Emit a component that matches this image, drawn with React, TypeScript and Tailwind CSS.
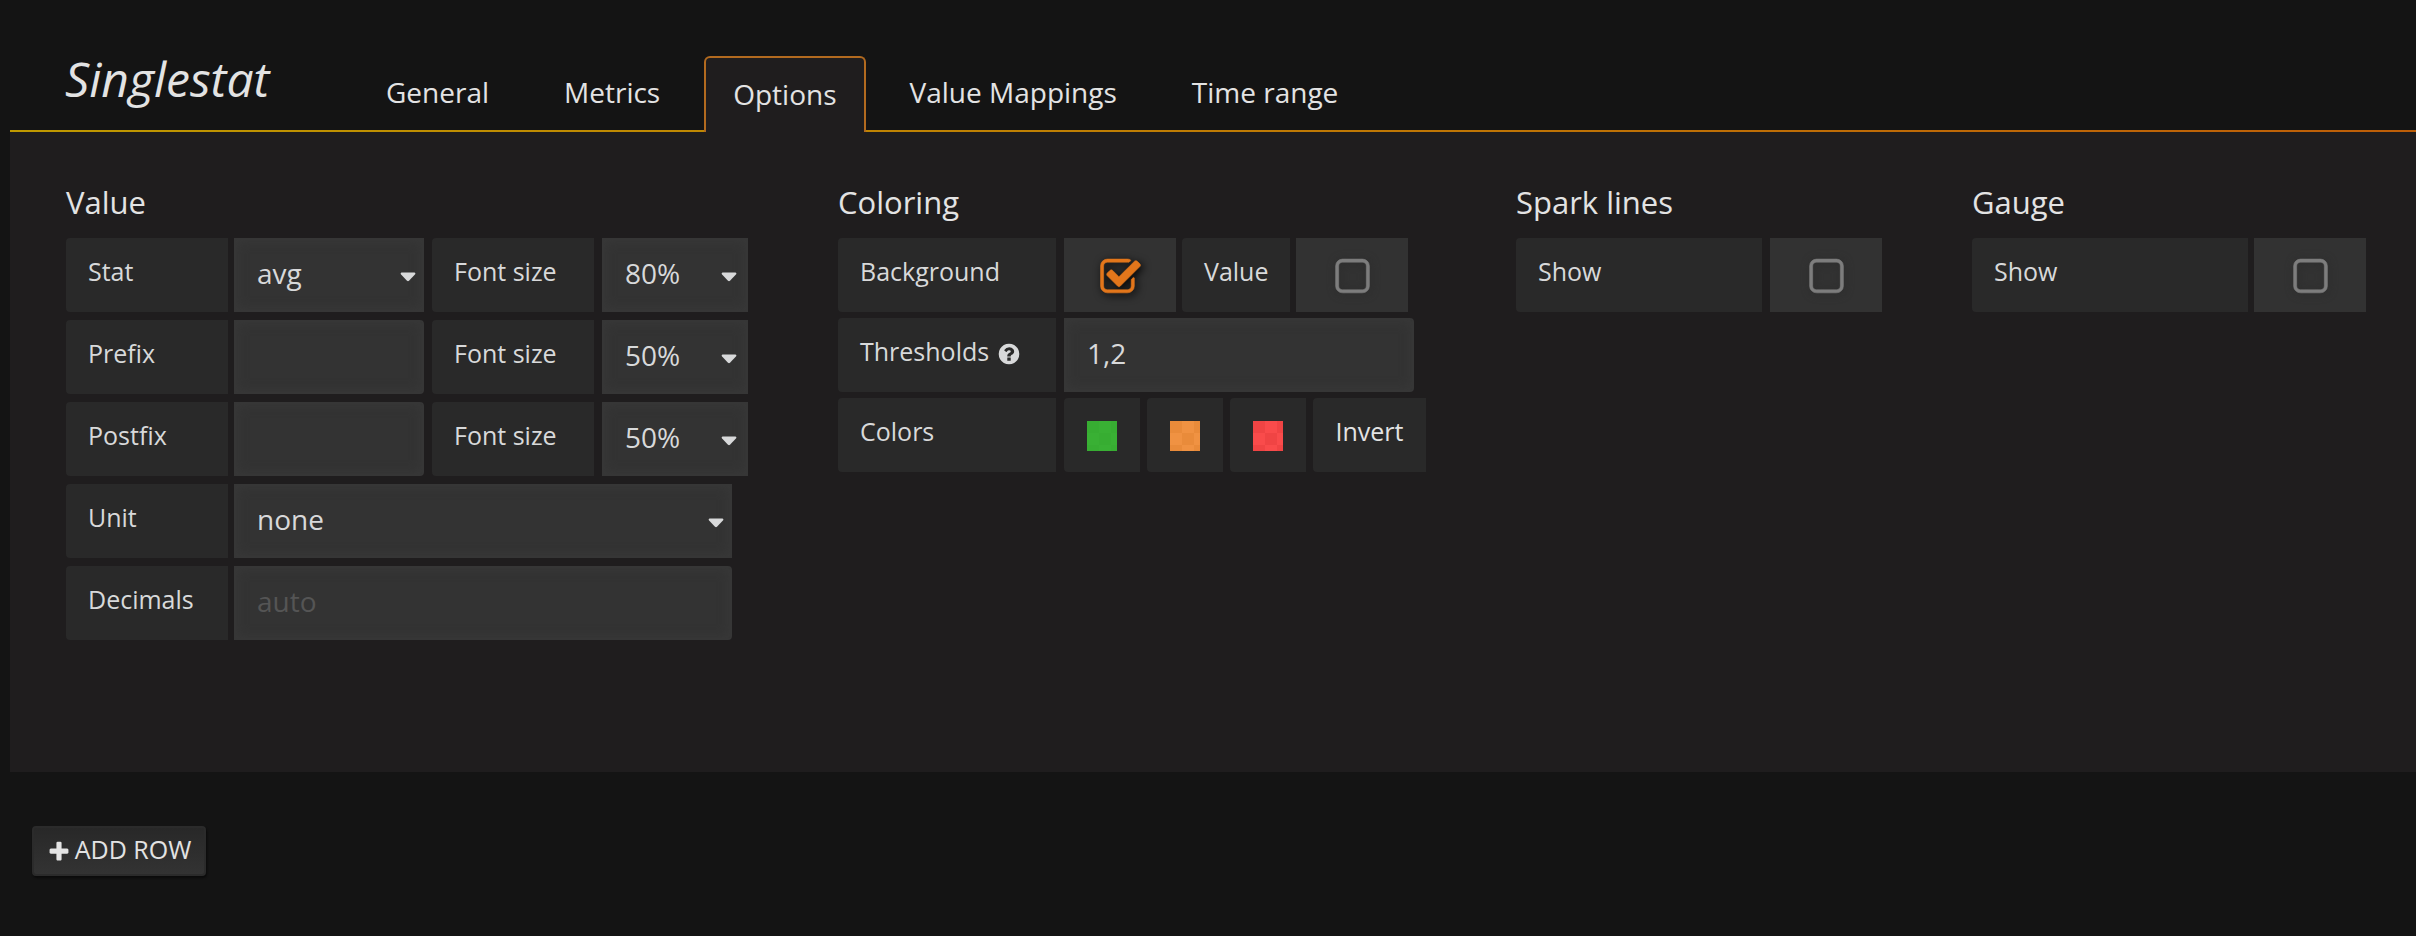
import { useState } from "react";
import type { ReactNode } from "react";

const LABEL = "flex h-[74px] shrink-0 items-center rounded-l bg-[#292929] pb-1.5 pl-[22px] text-[25px] text-[#d8d9da]";
const FIELD =
  "block h-[74px] w-full appearance-none border-2 border-[#363636] bg-[#333333] pb-1 pl-[21px] text-[28px] text-[#d8d9da] shadow-[inset_0_0_12px_#393939] outline-none placeholder:text-[#555555]";

function Select({
  id,
  value,
  options,
  width,
  caret = "right-2",
}: {
  id: string;
  value: string;
  options: string[];
  width: string;
  caret?: string;
}) {
  const [current, setCurrent] = useState(value);
  return (
    <div className={`relative ${width}`}>
      <select id={id} value={current} onChange={(e) => setCurrent(e.target.value)} className={FIELD}>
        {options.map((o) => (
          <option key={o}>{o}</option>
        ))}
      </select>
      <svg
        viewBox="0 0 16 10"
        className={`pointer-events-none absolute top-[34px] h-2.5 w-4 fill-[#d8d9da] ${caret}`}
      >
        <path d="M1.5 .5h13q1.6.6.4 2L9 8.8q-1 .9-2 0L1.1 2.5Q0 1.1 1.5.5z" />
      </svg>
    </div>
  );
}

function Check({ id, label, defaultChecked = false }: { id: string; label: string; defaultChecked?: boolean }) {
  const [on, setOn] = useState(defaultChecked);
  return (
    <label className="relative flex h-[74px] w-28 shrink-0 cursor-pointer items-center justify-center bg-[#323232] pt-1">
      <input
        id={id}
        type="checkbox"
        aria-label={label}
        checked={on}
        onChange={() => setOn(!on)}
        className="absolute inset-0 cursor-pointer appearance-none"
      />
      {on ? (
        <svg
          viewBox="0 0 1792 1792"
          className="pointer-events-none h-[43px] w-[43px] fill-[#e3761b] stroke-[#e3761b] stroke-[24] drop-shadow-[2px_2px_4px_#000000]"
        >
          <path d="M1472 930v318q0 119-84.5 203.5t-203.5 84.5h-832q-119 0-203.5-84.5t-84.5-203.5v-832q0-119 84.5-203.5t203.5-84.5h832q63 0 117 25 15 7 18 23 3 17-9 29l-49 49q-10 10-23 10-3 0-9-2-23-6-45-6h-832q-66 0-113 47t-47 113v832q0 66 47 113t113 47h832q66 0 113-47t47-113v-254q0-13 9-22l64-64q10-10 23-10 6 0 12 3 20 8 20 29zm231-489l-814 814q-24 24-57 24t-57-24l-430-430q-24-24-24-57t24-57l110-110q24-24 57-24t57 24l263 263 647-647q24-24 57-24t57 24l110 110q24 24 24 57t-24 57z" />
        </svg>
      ) : (
        <svg
          viewBox="0 0 1792 1792"
          className="pointer-events-none h-[43px] w-[43px] fill-[#7d7d7d] stroke-[#7d7d7d] stroke-[24] drop-shadow-[1px_1px_4px_#2a2a2a]"
        >
          <path d="M1312 256h-832q-66 0-113 47t-47 113v832q0 66 47 113t113 47h832q66 0 113-47t47-113v-832q0-66-47-113t-113-47zm288 160v832q0 119-84.5 203.5t-203.5 84.5h-832q-119 0-203.5-84.5t-84.5-203.5v-832q0-119 84.5-203.5t203.5-84.5h832q119 0 203.5 84.5t84.5 203.5z" />
        </svg>
      )}
    </label>
  );
}

function Section({ title, children }: { title: string; children: ReactNode }) {
  return (
    <section className="shrink-0">
      <h2 className="mb-4 text-[31px] leading-[40px] text-[#e3e3e3]">{title}</h2>
      {children}
    </section>
  );
}

const TABS = ["General", "Metrics", "Options", "Value Mappings", "Time range"];
const STATS = ["avg", "min", "max", "current", "total"];
const UNITS = ["none", "short", "percent", "bytes"];
const SIZES = ["20%", "30%", "50%", "70%", "80%", "100%"];
const SWATCHES = [
  { name: "Green", a: "bg-[#37ad32]", b: "fill-[#39b034]" },
  { name: "Orange", a: "bg-[#e98b3a]", b: "fill-[#f09242]" },
  { name: "Red", a: "bg-[#f04444]", b: "fill-[#f94b4b]" },
];

export default function App() {
  const [tab, setTab] = useState("Options");
  return (
    <div className="min-h-screen bg-[#141414] pl-[10px] font-['Open_Sans','Noto_Sans',sans-serif] text-[#e3e3e3]">
      <header className="flex h-[132px] items-end bg-[linear-gradient(to_right,#bf9900,#be5e08)] bg-[length:100%_2px] bg-bottom bg-no-repeat pl-[55px]">
        <h1 className="mb-[18px] w-[290px] text-[48px] italic leading-[70px]">Singlestat</h1>
        <nav role="tablist" className="flex items-end gap-[13px]">
          {TABS.map((t) => (
            <button
              key={t}
              type="button"
              role="tab"
              aria-selected={t === tab}
              onClick={() => setTab(t)}
              className={
                t === tab
                  ? "h-[76px] rounded-t-md border-2 border-b-0 border-[#b26a1f] bg-[#1f1d1e] px-[27px] pb-0.5 text-[28px]"
                  : "h-[76px] px-[31px] pb-1 text-[28px]"
              }
            >
              {t}
            </button>
          ))}
        </nav>
      </header>

      <main className="flex gap-[90px] bg-[#1f1d1e] pb-[132px] pl-14 pt-[50px]">
        <Section title="Value">
          <div className="flex flex-col gap-2">
            <div className="flex">
              <label htmlFor="stat" className={`${LABEL} mr-1.5 w-[162px]`}>Stat</label>
              <Select id="stat" value="avg" options={STATS} width="w-[190px]" />
              <label htmlFor="stat-size" className={`${LABEL} mx-2 w-[162px]`}>Font size</label>
              <Select id="stat-size" value="80%" options={SIZES} width="w-[146px]" caret="right-[11px]" />
            </div>
            <div className="flex">
              <label htmlFor="prefix" className={`${LABEL} mr-1.5 w-[162px]`}>Prefix</label>
              <div className="w-[190px]">
                <input id="prefix" type="text" className={`${FIELD} rounded-r`} />
              </div>
              <label htmlFor="prefix-size" className={`${LABEL} mx-2 w-[162px]`}>Font size</label>
              <Select id="prefix-size" value="50%" options={SIZES} width="w-[146px]" caret="right-[11px]" />
            </div>
            <div className="flex">
              <label htmlFor="postfix" className={`${LABEL} mr-1.5 w-[162px]`}>Postfix</label>
              <div className="w-[190px]">
                <input id="postfix" type="text" className={`${FIELD} rounded-r`} />
              </div>
              <label htmlFor="postfix-size" className={`${LABEL} mx-2 w-[162px]`}>Font size</label>
              <Select id="postfix-size" value="50%" options={SIZES} width="w-[146px]" caret="right-[11px]" />
            </div>
            <div className="flex">
              <label htmlFor="unit" className={`${LABEL} mr-1.5 w-[162px]`}>Unit</label>
              <Select id="unit" value="none" options={UNITS} width="w-[498px]" />
            </div>
            <div className="flex">
              <label htmlFor="decimals" className={`${LABEL} mr-1.5 w-[162px]`}>Decimals</label>
              <div className="w-[498px]">
                <input id="decimals" type="text" placeholder="auto" className={`${FIELD} rounded-r`} />
              </div>
            </div>
          </div>
        </Section>

        <Section title="Coloring">
          <div className="flex flex-col gap-1.5">
            <div className="flex">
              <label htmlFor="color-bg" className={`${LABEL} mr-2 w-[218px]`}>Background</label>
              <Check id="color-bg" label="Background" defaultChecked />
              <label htmlFor="color-value" className={`${LABEL} mx-1.5 w-[108px]`}>Value</label>
              <Check id="color-value" label="Value" />
            </div>
            <div className="flex">
              <label htmlFor="thresholds" className={`${LABEL} mr-2 w-[218px]`}>
                Thresholds
                <svg viewBox="0 0 1792 1792" className="ml-2 mt-1 h-6 w-6 fill-[#d8d9da]">
                  <path d="M1024 1376v-192q0-14-9-23t-23-9h-192q-14 0-23 9t-9 23v192q0 14 9 23t23 9h192q14 0 23-9t9-23zm256-672q0-88-55.5-163t-138.5-116-170-41q-243 0-371 213-15 24 8 42l132 100q7 6 19 6 16 0 25-12 53-68 86-92 34-24 86-24 48 0 85.5 26t37.5 59q0 38-20 61t-68 45q-63 28-115.5 86.5t-52.5 125.5v36q0 14 9 23t23 9h192q14 0 23-9t9-23q0-19 21.5-49.5t54.5-49.5q32-18 49-28.5t46-35 44.5-48 28-60.5 12.5-81zm384 192q0 209-103 385.5t-279.5 279.5-385.5 103-385.5-103-279.5-279.5-103-385.5 103-385.5 279.5-279.5 385.5-103 385.5 103 279.5 279.5 103 385.5z" />
                </svg>
              </label>
              <div className="w-[350px]">
                <input id="thresholds" type="text" defaultValue="1,2" className={`${FIELD} rounded-r`} />
              </div>
            </div>
            <div className="flex gap-2">
              <div className={`${LABEL} w-[218px]`}>Colors</div>
              <div className="flex gap-[7px]">
                {SWATCHES.map((s) => (
                  <button
                    key={s.name}
                    type="button"
                    aria-label={s.name}
                    className="flex h-[74px] w-[76px] items-center justify-center rounded-l bg-[#292929]"
                  >
                    <span className={`mt-0.5 h-[30px] w-[30px] ${s.a}`}>
                      <svg viewBox="0 0 30 30" className={`h-[30px] w-[30px] ${s.b}`}>
                        <path d="M12 0h12v12H12zM0 12h12v12H0zM24 12h6v12h-6zM12 24h12v6H12z" />
                      </svg>
                    </span>
                  </button>
                ))}
                <button type="button" className="h-[74px] w-[113px] rounded-l bg-[#292929] pb-1.5 text-[25px]">
                  Invert
                </button>
              </div>
            </div>
          </div>
        </Section>

        <Section title="Spark lines">
          <div className="flex gap-2">
            <label htmlFor="spark" className={`${LABEL} w-[246px]`}>Show</label>
            <Check id="spark" label="Show spark lines" />
          </div>
        </Section>

        <Section title="Gauge">
          <div className="flex gap-1.5">
            <label htmlFor="gauge" className={`${LABEL} w-[276px]`}>Show</label>
            <Check id="gauge" label="Show gauge" />
          </div>
        </Section>
      </main>

      <button
        type="button"
        className="ml-[22px] mt-[54px] flex h-[50px] w-[174px] items-center justify-center gap-1 rounded border-2 border-[#2b2b2b] bg-linear-to-b from-[#282828] to-[#333333] pb-0.5 text-[25px] shadow-[1px_2px_2px_#0b0b0b]"
      >
        <svg viewBox="0 0 1792 1792" className="mt-1 h-6 w-6 fill-[#e3e3e3]">
          <path d="M1600 736v192q0 40-28 68t-68 28h-416v416q0 40-28 68t-68 28h-192q-40 0-68-28t-28-68v-416h-416q-40 0-68-28t-28-68v-192q0-40 28-68t68-28h416v-416q0-40 28-68t68-28h192q40 0 68 28t28 68v416h416q40 0 68 28t28 68z" />
        </svg>
        ADD ROW
      </button>
    </div>
  );
}
